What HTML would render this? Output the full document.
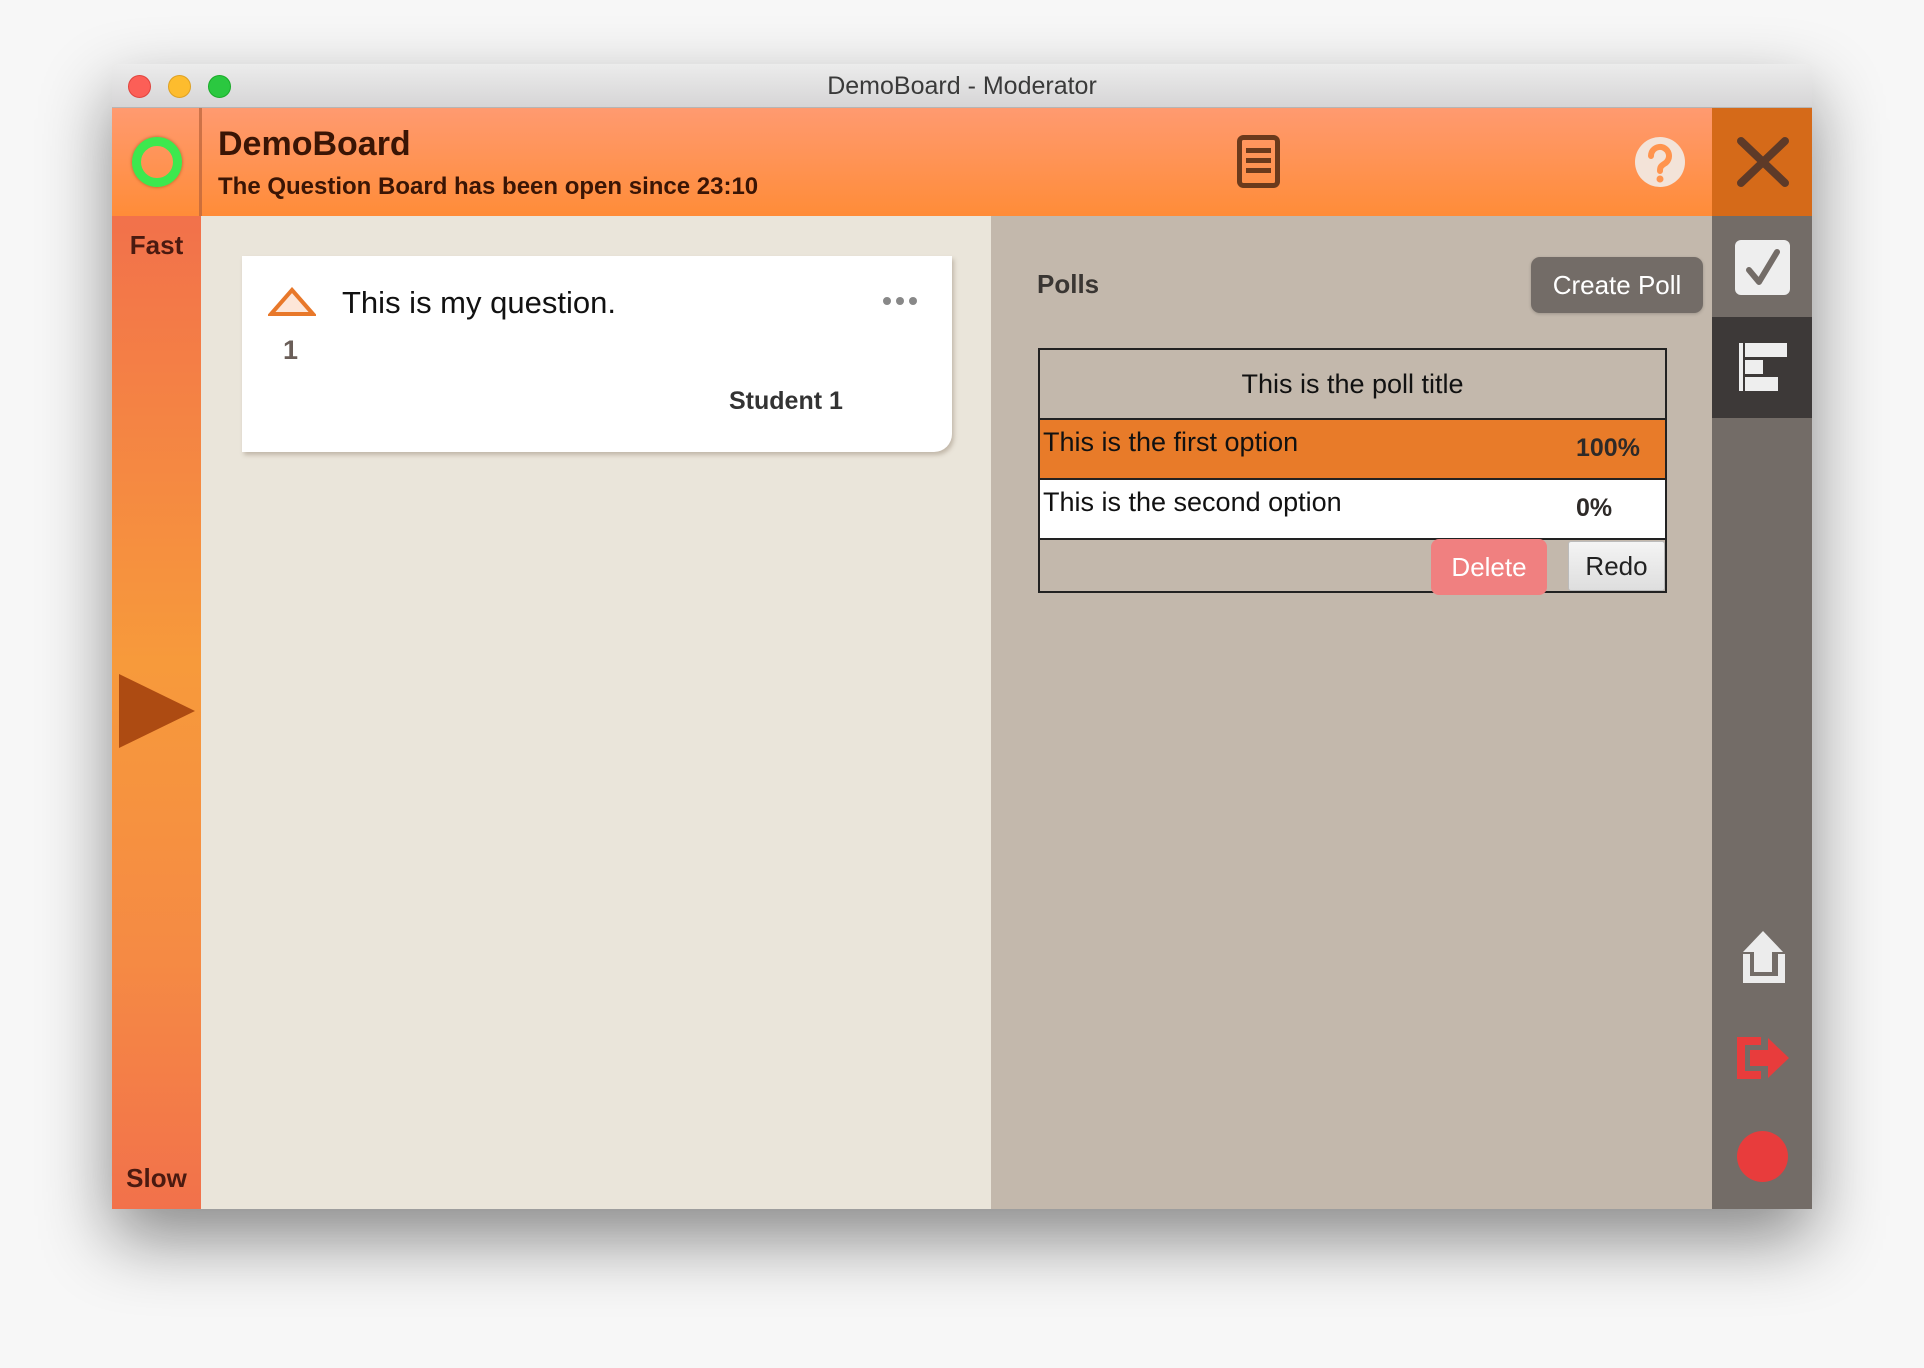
<!DOCTYPE html>
<html><head><meta charset="utf-8"><style>
*{margin:0;padding:0;box-sizing:border-box}
body{width:1924px;height:1368px;background:#f7f7f7;font-family:"Liberation Sans",sans-serif;position:relative;overflow:hidden}
.win{position:absolute;left:112px;top:64px;width:1700px;height:1145px;box-shadow:0 30px 70px rgba(0,0,0,.45);border-radius:6px 6px 0 0;overflow:hidden;background:#eae5da}
.tb{position:absolute;left:0;top:0;width:1700px;height:44px;background:linear-gradient(#ececec,#d6d5d6);border-bottom:1px solid #b5b5b5;text-align:center;font-size:25px;line-height:44px;color:#3a3a3a}
.dot{position:absolute;top:11px;width:23px;height:23px;border-radius:50%}
.abs{position:absolute}
.hdr{left:0;top:44px;width:1600px;height:108px;background:linear-gradient(#ff9a70,#ff8c38)}
.left{left:0;top:152px;width:89px;height:993px;background:linear-gradient(#f2714b 0%,#f79a3b 45%,#f58a44 75%,#f2714b 100%)}
.qp{left:89px;top:152px;width:790px;height:993px;background:#eae5da}
.pp{left:879px;top:152px;width:721px;height:993px;background:#c3b8ac}
.sb{left:1600px;top:44px;width:100px;height:1101px;background:#736c67}
</style></head><body>
<div class="win">
 <div class="tb">DemoBoard - Moderator
  <div class="dot" style="left:16px;background:#fc5f57;border:1px solid #e0443e"></div>
  <div class="dot" style="left:56px;background:#fdbc2e;border:1px solid #dea123"></div>
  <div class="dot" style="left:96px;background:#2bc840;border:1px solid #1aab29"></div>
 </div>
 <div class="abs hdr"></div>
 <div class="abs" style="left:87px;top:44px;width:3px;height:108px;background:#b8623a;opacity:.7"></div>
 <div class="abs" style="left:20px;top:73px;width:50px;height:50px;border-radius:50%;border:9px solid #3de84e;box-shadow:0 0 3px rgba(120,60,0,.6)"></div>
 <div class="abs" style="left:106px;top:61px;font-size:34px;font-weight:bold;color:#3a1505">DemoBoard</div>
 <div class="abs" style="left:106px;top:109px;font-size:24px;font-weight:bold;color:#3a1505">The Question Board has been open since 23:10</div>
 <svg class="abs" style="left:1125px;top:71px" width="43" height="53" viewBox="0 0 43 53"><rect x="2.5" y="2.5" width="38" height="48" rx="4" fill="none" stroke="#6b3a1c" stroke-width="5"/><rect x="9" y="13" width="25" height="5" fill="#6b3a1c"/><rect x="9" y="23" width="25" height="5" fill="#6b3a1c"/><rect x="9" y="33" width="25" height="5" fill="#6b3a1c"/></svg>
 <svg class="abs" style="left:1522px;top:72px" width="52" height="52" viewBox="0 0 52 52"><ellipse cx="26" cy="26" rx="25" ry="25" fill="#f3e3d8"/><path d="M17 20 a9 9 0 1 1 13 8 c-3 2 -4 3 -4 7" fill="none" stroke="#ff944e" stroke-width="6" stroke-linecap="round"/><circle cx="26" cy="43" r="3.5" fill="#ff944e"/></svg>
 <div class="abs left"></div>
 <div class="abs" style="left:0;top:166px;width:89px;text-align:center;font-size:26px;font-weight:bold;color:#4a1a10">Fast</div>
 <div class="abs" style="left:0;top:1099px;width:89px;text-align:center;font-size:26px;font-weight:bold;color:#4a1a10">Slow</div>
 <svg class="abs" style="left:7px;top:610px" width="76" height="74"><polygon points="0,0 76,37 0,74" fill="#ad4b12"/></svg>
 <div class="abs qp"></div>
 <div class="abs" style="left:130px;top:192px;width:710px;height:196px;background:#fff;border-radius:0 0 18px 0;box-shadow:2px 3px 4px rgba(120,100,80,.35)"></div>
 <svg class="abs" style="left:156px;top:223px" width="48" height="30"><polygon points="24,3 45,27 3,27" fill="#fde6d8" stroke="#e8782a" stroke-width="4"/></svg>
 <div class="abs" style="left:230px;top:221px;font-size:31px;color:#111">This is my question.</div>
 <div class="abs" style="left:171px;top:271px;font-size:27px;font-weight:bold;color:#6a5e58">1</div>
 <div class="abs" style="left:617px;top:323px;font-size:25px;font-weight:bold;color:#333">Student 1</div>
 <div class="abs" style="left:771px;top:233px;font-size:0"><span style="display:inline-block;width:8px;height:8px;border-radius:50%;background:#888;margin-right:5px"></span><span style="display:inline-block;width:8px;height:8px;border-radius:50%;background:#888;margin-right:5px"></span><span style="display:inline-block;width:8px;height:8px;border-radius:50%;background:#888"></span></div>
 <div class="abs pp"></div>
 <div class="abs" style="left:925px;top:205px;font-size:26px;font-weight:bold;color:#3a3633">Polls</div>
 <div class="abs" style="left:1419px;top:193px;width:172px;height:56px;background:#736c67;border-radius:9px;color:#fff;font-size:26px;text-align:center;line-height:56px;box-shadow:0 1px 3px rgba(0,0,0,.2)">Create Poll</div>
 <div class="abs" style="left:926px;top:284px;width:629px;height:245px;border:2px solid #222"></div>
 <div class="abs" style="left:928px;top:286px;width:625px;height:68px;text-align:center;line-height:68px;font-size:27px;color:#111">This is the poll title</div>
 <div class="abs" style="left:928px;top:354px;width:625px;height:62px;background:#e87b29;border-top:2px solid #222;border-bottom:2px solid #222"></div>
 <div class="abs" style="left:931px;top:363px;font-size:27px;color:#111">This is the first option</div>
 <div class="abs" style="left:1464px;top:370px;font-size:25px;font-weight:bold;color:#2e2a28">100%</div>
 <div class="abs" style="left:928px;top:416px;width:625px;height:60px;background:#fff;border-bottom:2px solid #222"></div>
 <div class="abs" style="left:931px;top:423px;font-size:27px;color:#111">This is the second option</div>
 <div class="abs" style="left:1464px;top:430px;font-size:25px;font-weight:bold;color:#2e2a28">0%</div>
 <div class="abs" style="left:1319px;top:475px;width:116px;height:56px;background:#f08080;border-radius:8px;color:#fff;font-size:26px;text-align:center;line-height:56px">Delete</div>
 <div class="abs" style="left:1456px;top:477px;width:97px;height:50px;background:linear-gradient(#f4f4f4,#dedede);border:1px solid #bbb;border-radius:3px;color:#222;font-size:26px;text-align:center;line-height:48px">Redo</div>
 <div class="abs sb"></div>
 <div class="abs" style="left:1600px;top:44px;width:100px;height:108px;background:#d56a19"></div>
 <svg class="abs" style="left:1623px;top:71px" width="56" height="54"><path d="M6 6 L50 48 M50 6 L6 48" stroke="#5e3a28" stroke-width="8" stroke-linecap="round"/></svg>
 <div class="abs" style="left:1623px;top:176px;width:55px;height:55px;background:#eee;border-radius:6px"></div>
 <svg class="abs" style="left:1623px;top:176px" width="55" height="55"><path d="M14 30 L24 42 L42 12" fill="none" stroke="#736c67" stroke-width="6" stroke-linecap="round" stroke-linejoin="round"/></svg>
 <div class="abs" style="left:1600px;top:253px;width:100px;height:101px;background:#3d3938"></div>
 <svg class="abs" style="left:1627px;top:279px" width="50" height="50"><rect x="0" y="0" width="4" height="48" fill="#eee"/><rect x="6" y="0" width="42" height="14" fill="#eee"/><rect x="6" y="17" width="18" height="14" fill="#eee"/><rect x="6" y="34" width="33" height="14" fill="#eee"/></svg>
 <svg class="abs" style="left:1631px;top:867px" width="42" height="54"><path d="M3.5 23 V48.5 H38.5 V23" fill="none" stroke="#ececec" stroke-width="7"/><rect x="11" y="19" width="18" height="22" fill="#ececec"/><polygon points="20,0 40,21 0,21" fill="#ececec"/></svg>
 <svg class="abs" style="left:1625px;top:973px" width="54" height="42"><path d="M24 4 H4 V38 H24" fill="none" stroke="#e83c3c" stroke-width="8"/><polygon points="13,13 31,13 31,1 52,21 31,41 31,29 13,29" fill="#e83c3c"/></svg>
 <div class="abs" style="left:1625px;top:1067px;width:51px;height:51px;border-radius:50%;background:#e83c3c"></div>
</div>
</body></html>
